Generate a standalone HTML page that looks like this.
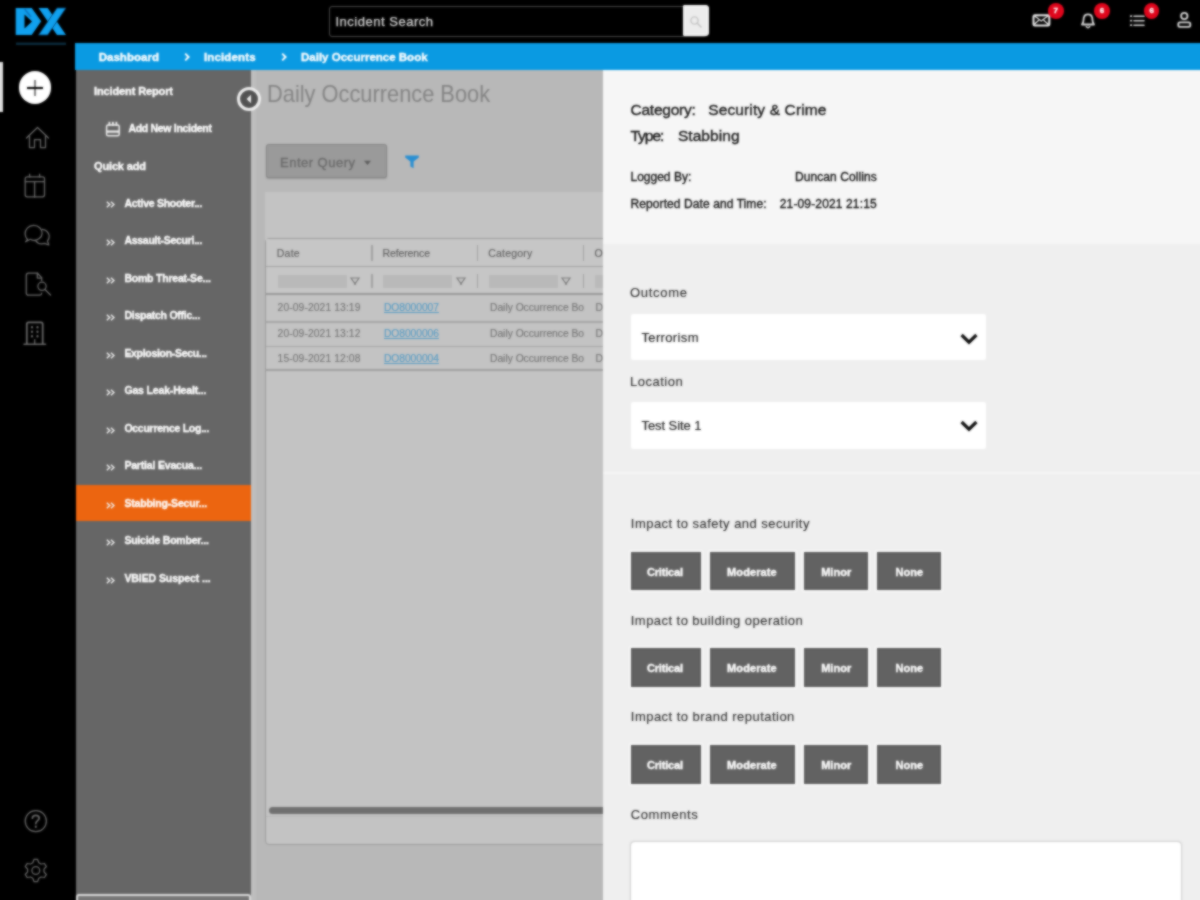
<!DOCTYPE html>
<html>
<head>
<meta charset="utf-8">
<title>Daily Occurrence Book</title>
<style>
*{box-sizing:border-box;margin:0;padding:0}
html,body{width:1200px;height:900px;overflow:hidden;background:#000;font-family:"Liberation Sans",sans-serif;}
#clip{position:absolute;left:0;top:0;width:1200px;height:900px;overflow:hidden}
#root{position:absolute;left:-12px;top:-12px;width:1224px;height:924px;overflow:hidden;filter:url(#bl)}
#in{position:absolute;left:12px;top:12px;width:1200px;height:900px}
.a{position:absolute}
.t{position:absolute;white-space:pre;line-height:1;-webkit-text-stroke:0.35px}
svg{position:absolute;overflow:visible}
</style>
</head>
<body>
<svg width="0" height="0" style="position:absolute"><defs><filter id="bl" x="0" y="0" width="100%" height="100%" color-interpolation-filters="sRGB"><feGaussianBlur stdDeviation="0.9" result="b"/><feComposite in="SourceGraphic" in2="b" operator="arithmetic" k1="0" k2="0.2" k3="0.8" k4="0"/></filter></defs></svg>
<div id="clip"><div id="root"><div id="in">

<div class="a" style="left:-12px;top:-12px;width:1224px;height:924px;background:#000"></div>
<div class="a" style="left:75px;top:43px;width:1140px;height:27px;background:#0a9ae2"></div>
<div class="a" style="left:76px;top:70px;width:175px;height:845px;background:#666"></div>
<div class="a" style="left:251px;top:70px;width:352px;height:845px;background:#b8b8b8"></div>
<div class="a" style="left:251px;top:70px;width:5px;height:845px;background:#bebebe"></div>
<div class="a" style="left:603px;top:70px;width:612px;height:174px;background:#f6f6f6"></div>
<div class="a" style="left:603px;top:244px;width:612px;height:671px;background:#efefef"></div>
<div class="a" style="left:603px;top:472px;width:612px;height:2px;background:#f5f5f5"></div>
<svg style="left:0;top:0" width="80" height="50" viewBox="0 0 80 50">
<g fill="#10a0ee">
<path d="M15.7 8 L31.7 8 L41.2 21.3 L31.7 35 L15.7 35 Z M24.5 14.6 L24.5 28.6 L32 21.5 Z" fill-rule="evenodd"/>
<path d="M38.5 8 L47.7 8 L66 35 L57 35 Z"/>
<path d="M57 8 L66 8 L47.7 35 L38.5 35 Z" stroke="#063a63" stroke-width="0.8"/>
</g>
<path d="M24.6 9 L31 17" fill="none" stroke="#0a4f98" stroke-width="1.6" opacity=".55"/>
<rect x="16" y="42.6" width="50" height="2.4" fill="#0b2c3d"/>
</svg>
<div class="a" style="left:329px;top:5.8px;width:378px;height:31.2px;border:1.5px solid #4a4a4a;border-radius:3px;background:#000"></div>
<div class="a" style="left:682.5px;top:5.3px;width:26px;height:30.6px;background:#ececec;border:1.5px solid #fff;border-radius:1px 3px 3px 1px"></div>
<svg style="left:687.6px;top:14.4px" width="16" height="16" viewBox="0 0 16 16"><circle cx="6.5" cy="6.5" r="3.6" fill="none" stroke="#c4c4c4" stroke-width="1.4"/><path d="M9.3 9.3 L13 13" stroke="#c4c4c4" stroke-width="1.6" stroke-linecap="round"/></svg>
<span class="t" style="left:335.5px;top:14.7px;font-size:13px;color:#dadada;font-weight:400;letter-spacing:0.51px;-webkit-text-stroke:0.25px;">Incident Search</span>
<svg style="left:1025px;top:0" width="175" height="43" viewBox="1025 0 175 43" fill="none" stroke="#dcdcdc" stroke-width="1.8" stroke-linejoin="round" stroke-linecap="round">
<rect x="1033.5" y="15.2" width="15.8" height="10.4"  rx="1.5" stroke="#f2f2f2" stroke-width="2"/>
<path d="M1034 15.5 L1041.2 21 L1048.5 15.5 M1034 24.5 L1038.5 20.5 M1048.5 24.5 L1044 20.5" stroke-width="1.5"/>
<path d="M1082 24.5 C1084 22.5 1083.3 19 1084 17 C1085 13.5 1091 13.5 1092 17 C1092.7 19 1092 22.5 1094 24.5 Z"/>
<path d="M1086.3 26.8 Q1088 28.6 1089.7 26.8" stroke-width="1.6"/>
<path d="M1134 16.2 H1144 M1134 20.7 H1144 M1134 25.2 H1144" stroke-width="1.6"/>
<path d="M1130.8 16.2 h.6 M1130.8 20.7 h.6 M1130.8 25.2 h.6" stroke-width="1.8"/>
<circle cx="1184.3" cy="16" r="3.2"/>
<rect x="1178.3" y="22.3" width="12" height="4.6" rx="1.6"/>
</svg>
<div class="a" style="left:1048.0px;top:3.2px;width:15.6px;height:15.6px;border-radius:50%;background:#e0061c"></div>
<span class="t" style="left:1053.5px;top:7.0px;font-size:8px;color:#fff;font-weight:700;">7</span>
<div class="a" style="left:1094.2px;top:3.2px;width:15.6px;height:15.6px;border-radius:50%;background:#e0061c"></div>
<span class="t" style="left:1099.7px;top:7.0px;font-size:8px;color:#fff;font-weight:700;">6</span>
<div class="a" style="left:1143.9px;top:3.2px;width:15.6px;height:15.6px;border-radius:50%;background:#e0061c"></div>
<span class="t" style="left:1149.4px;top:7.0px;font-size:8px;color:#fff;font-weight:700;">6</span>
<span class="t" style="left:98.7px;top:51.5px;font-size:11.5px;color:#fff;font-weight:700;letter-spacing:0.03px;">Dashboard</span>
<span class="t" style="left:204.0px;top:51.5px;font-size:11.5px;color:#fff;font-weight:700;letter-spacing:0.13px;">Incidents</span>
<span class="t" style="left:301.0px;top:51.5px;font-size:11.5px;color:#fff;font-weight:700;">Daily Occurrence Book</span>
<svg style="left:182.5px;top:51.4px" width="8" height="12" viewBox="0 0 8 12"><path d="M2.2 2.6 L5.6 6 L2.2 9.4" fill="none" stroke="#fff" stroke-width="1.9"/></svg>
<svg style="left:279.5px;top:51.4px" width="8" height="12" viewBox="0 0 8 12"><path d="M2.2 2.6 L5.6 6 L2.2 9.4" fill="none" stroke="#fff" stroke-width="1.9"/></svg>
<div class="a" style="left:-12px;top:62px;width:15px;height:50px;background:#dcdcdc"></div>
<div class="a" style="left:19px;top:71.2px;width:32.4px;height:32.4px;border-radius:50%;background:#fff"></div>
<div class="a" style="left:34.1px;top:79.6px;width:2.4px;height:16px;background:#808080"></div>
<div class="a" style="left:27.3px;top:86.5px;width:16px;height:2.6px;background:#000"></div>
<svg style="left:0;top:110px" width="76" height="260" viewBox="0 110 76 260" fill="none" stroke="#6a6a6a" stroke-width="1.25" stroke-linejoin="round" stroke-linecap="round">
<path d="M26.5 138 L37.5 127.5 L48.5 138"/>
<path d="M29.5 136 V147.5 H34.5 V139.5 H40.5 V147.5 H45.5 V136"/>
<rect x="25.2" y="176.8" width="19.3" height="20" rx="2"/>
<path d="M25.2 181.5 H44.5 M34.6 181.5 V197 M29.6 174.2 V177 M39.6 174.2 V177"/>
<path d="M27.5 239.5 C24.5 236.5 24.3 231.5 27.3 228.2 C30.5 224.7 36.5 224.5 39.8 227.8 C43 231 42.8 236 39.3 238.6 C36.5 240.7 32.8 240.8 30.3 239.3 L25.6 241.8 Z"/>
<path d="M42 229.3 C45.5 229.5 48.8 232 49.2 235.8 C49.4 238 48.6 239.8 47.5 241 L48.8 245 L44.5 243.4 C41 244.3 37.5 243.2 35.8 240.8"/>
<path d="M37.5 273.2 H28.5 Q26.3 273.2 26.3 275.4 V293 Q26.3 295.2 28.5 295.2 H39.5 Q41.5 295.2 41.7 293.2"/>
<path d="M37.5 273.2 L41.7 277.6 V280.5 M37.3 273.4 V278 H41.5"/>
<circle cx="42" cy="286.3" r="4.1"/>
<path d="M45 289.5 L50.5 295"/>
<path d="M26.8 344 V324 Q26.8 322.3 28.5 322.3 H41 Q42.7 322.3 42.7 324 V344" stroke-width="1.7"/>
<path d="M24 344.2 H45.5" stroke-width="1.6"/>
<path d="M32 327 v.4 M37.5 327 v.4 M32 331.5 v.4 M37.5 331.5 v.4 M32 336 v.4 M37.5 336 v.4" stroke-width="2.2"/>
<path d="M34.7 344 V339.5"/>
</svg>
<svg style="left:0;top:800px" width="76" height="100" viewBox="0 800 76 100" fill="none" stroke="#6a6a6a" stroke-width="1.25" stroke-linejoin="round" stroke-linecap="round">
<circle cx="35.8" cy="821.1" r="10.6"/>
<path d="M32.4 818.2 C32.4 814.3 39.2 814.3 39.2 818.2 C39.2 820.6 35.8 820.8 35.8 823.6" stroke-width="1.7"/>
<path d="M35.8 826.6 v.5" stroke-width="2"/>
<circle cx="35.8" cy="870.5" r="3.9"/>
<path d="M38.8 862.8 L37.6 859.4 L34.0 859.4 L32.8 862.8 L30.6 864.0 L27.1 863.5 L25.3 866.5 L27.6 869.2 L27.6 871.8 L25.3 874.5 L27.1 877.5 L30.6 877.0 L32.8 878.2 L34.0 881.6 L37.6 881.6 L38.8 878.2 L41.0 877.0 L44.5 877.5 L46.3 874.5 L44.0 871.8 L44.0 869.2 L46.3 866.5 L44.5 863.5 L41.0 864.0 Z"/>
</svg>
<div class="a" style="left:76px;top:485px;width:175.3px;height:36px;background:#ec6510"></div>
<span class="t" style="left:94.0px;top:86.0px;font-size:11px;color:#fff;font-weight:700;letter-spacing:-0.12px;">Incident Report</span>
<span class="t" style="left:128.4px;top:123.0px;font-size:10.5px;color:#fff;font-weight:700;letter-spacing:-0.30px;">Add New Incident</span>
<span class="t" style="left:94.0px;top:161.0px;font-size:11px;color:#fff;font-weight:700;letter-spacing:-0.15px;">Quick add</span>
<svg style="left:104px;top:120px" width="18" height="18" viewBox="104 120 18 18" fill="none" stroke="#efefef" stroke-width="1.5" stroke-linejoin="round">
<rect x="106.6" y="125" width="12.6" height="10.8" rx="1.6"/>
<path d="M106.6 131.6 H119.2" stroke-width="2.2"/>
<path d="M109.4 121.8 V126 M112.9 121.8 V126 M116.4 121.8 V126" stroke-width="1.8"/>
</svg>
<span class="t" style="left:124.4px;top:197.6px;font-size:10.5px;color:#fff;font-weight:700;letter-spacing:-0.27px;">Active Shooter...</span>
<svg style="left:105px;top:200.3px" width="12" height="9" viewBox="0 0 12 9"><path d="M1.8 1.8 L4.7 4.5 L1.8 7.2 M6 1.8 L8.9 4.5 L6 7.2" fill="none" stroke="#f0f0f0" stroke-width="1.4"/></svg>
<span class="t" style="left:124.4px;top:235.3px;font-size:10.5px;color:#fff;font-weight:700;letter-spacing:-0.27px;">Assault-Securi...</span>
<svg style="left:105px;top:238.0px" width="12" height="9" viewBox="0 0 12 9"><path d="M1.8 1.8 L4.7 4.5 L1.8 7.2 M6 1.8 L8.9 4.5 L6 7.2" fill="none" stroke="#f0f0f0" stroke-width="1.4"/></svg>
<span class="t" style="left:124.4px;top:272.8px;font-size:10.5px;color:#fff;font-weight:700;letter-spacing:-0.21px;">Bomb Threat-Se...</span>
<svg style="left:105px;top:275.5px" width="12" height="9" viewBox="0 0 12 9"><path d="M1.8 1.8 L4.7 4.5 L1.8 7.2 M6 1.8 L8.9 4.5 L6 7.2" fill="none" stroke="#f0f0f0" stroke-width="1.4"/></svg>
<span class="t" style="left:124.4px;top:310.3px;font-size:10.5px;color:#fff;font-weight:700;letter-spacing:-0.25px;">Dispatch Offic...</span>
<svg style="left:105px;top:313.0px" width="12" height="9" viewBox="0 0 12 9"><path d="M1.8 1.8 L4.7 4.5 L1.8 7.2 M6 1.8 L8.9 4.5 L6 7.2" fill="none" stroke="#f0f0f0" stroke-width="1.4"/></svg>
<span class="t" style="left:124.4px;top:347.8px;font-size:10.5px;color:#fff;font-weight:700;letter-spacing:-0.31px;">Explosion-Secu...</span>
<svg style="left:105px;top:350.5px" width="12" height="9" viewBox="0 0 12 9"><path d="M1.8 1.8 L4.7 4.5 L1.8 7.2 M6 1.8 L8.9 4.5 L6 7.2" fill="none" stroke="#f0f0f0" stroke-width="1.4"/></svg>
<span class="t" style="left:124.4px;top:385.3px;font-size:10.5px;color:#fff;font-weight:700;letter-spacing:-0.16px;">Gas Leak-Healt...</span>
<svg style="left:105px;top:388.0px" width="12" height="9" viewBox="0 0 12 9"><path d="M1.8 1.8 L4.7 4.5 L1.8 7.2 M6 1.8 L8.9 4.5 L6 7.2" fill="none" stroke="#f0f0f0" stroke-width="1.4"/></svg>
<span class="t" style="left:124.4px;top:422.8px;font-size:10.5px;color:#fff;font-weight:700;letter-spacing:-0.27px;">Occurrence Log...</span>
<svg style="left:105px;top:425.5px" width="12" height="9" viewBox="0 0 12 9"><path d="M1.8 1.8 L4.7 4.5 L1.8 7.2 M6 1.8 L8.9 4.5 L6 7.2" fill="none" stroke="#f0f0f0" stroke-width="1.4"/></svg>
<span class="t" style="left:124.4px;top:460.3px;font-size:10.5px;color:#fff;font-weight:700;letter-spacing:-0.18px;">Partial Evacua...</span>
<svg style="left:105px;top:463.0px" width="12" height="9" viewBox="0 0 12 9"><path d="M1.8 1.8 L4.7 4.5 L1.8 7.2 M6 1.8 L8.9 4.5 L6 7.2" fill="none" stroke="#f0f0f0" stroke-width="1.4"/></svg>
<span class="t" style="left:124.4px;top:497.8px;font-size:10.5px;color:#fff;font-weight:700;letter-spacing:-0.19px;">Stabbing-Secur...</span>
<svg style="left:105px;top:500.5px" width="12" height="9" viewBox="0 0 12 9"><path d="M1.8 1.8 L4.7 4.5 L1.8 7.2 M6 1.8 L8.9 4.5 L6 7.2" fill="none" stroke="#f0f0f0" stroke-width="1.4"/></svg>
<span class="t" style="left:124.4px;top:535.3px;font-size:10.5px;color:#fff;font-weight:700;letter-spacing:-0.23px;">Suicide Bomber...</span>
<svg style="left:105px;top:538.0px" width="12" height="9" viewBox="0 0 12 9"><path d="M1.8 1.8 L4.7 4.5 L1.8 7.2 M6 1.8 L8.9 4.5 L6 7.2" fill="none" stroke="#f0f0f0" stroke-width="1.4"/></svg>
<span class="t" style="left:124.4px;top:572.8px;font-size:10.5px;color:#fff;font-weight:700;letter-spacing:-0.08px;">VBIED Suspect ...</span>
<svg style="left:105px;top:575.5px" width="12" height="9" viewBox="0 0 12 9"><path d="M1.8 1.8 L4.7 4.5 L1.8 7.2 M6 1.8 L8.9 4.5 L6 7.2" fill="none" stroke="#f0f0f0" stroke-width="1.4"/></svg>
<div class="a" style="left:76px;top:894px;width:175px;height:22px;background:#787878;border:2px solid #dadada;border-radius:3px"></div>
<div class="a" style="left:237px;top:87.2px;width:24px;height:24px;border-radius:50%;background:#525252;border:3px solid #ececec"></div>
<svg style="left:243.6px;top:93.2px" width="10" height="12" viewBox="0 0 10 12"><path d="M7 1.8 L2.6 6 L7 10.2 Z" fill="#f0f0f0"/></svg>
<span class="t" style="left:267.4px;top:82.1px;font-size:24px;color:#848484;font-weight:400;-webkit-text-stroke:0;transform:scaleX(0.909);transform-origin:0 0;">Daily Occurrence Book</span>
<div class="a" style="left:265.5px;top:143.8px;width:121.5px;height:34px;background:#9a9a9a;border:1.5px solid #858585;border-radius:2.5px;box-shadow:0 1px 1.5px rgba(90,90,90,.35)"></div>
<span class="t" style="left:280.0px;top:155.7px;font-size:13px;color:#6a6a6a;font-weight:400;letter-spacing:0.49px;">Enter Query</span>
<svg style="left:363px;top:159.5px" width="9" height="6" viewBox="0 0 9 6"><path d="M1 .8 H8 L4.5 5 Z" fill="#5e5e5e"/></svg>
<svg style="left:404px;top:154px" width="16" height="16" viewBox="0 0 16 16"><path d="M1.2 1.6 H14.8 V3.4 L9.6 7.6 V14.2 L6.4 12.4 V7.6 L1.2 3.4 Z" fill="#2a8fd2"/></svg>
<div class="a" style="left:265px;top:191.5px;width:338px;height:48px;background:#c3c3c3"></div>
<div class="a" style="left:265px;top:238px;width:345px;height:607px;background:#c3c3c3;border:1.5px solid #9c9c9c;border-radius:4px"></div>
<div class="a" style="left:266px;top:239px;width:337px;height:56px;background:#c6c6c6"></div>
<div class="a" style="left:266px;top:265.6px;width:337px;height:1.4px;background:#a3a3a3"></div>
<div class="a" style="left:266px;top:293.4px;width:337px;height:2px;background:#9a9a9a"></div>
<div class="a" style="left:266px;top:321px;width:337px;height:1.5px;background:#a6a6a6"></div>
<div class="a" style="left:266px;top:345.5px;width:337px;height:1.5px;background:#a6a6a6"></div>
<div class="a" style="left:266px;top:369px;width:337px;height:1.7px;background:#a0a0a0"></div>
<div class="a" style="left:371.2px;top:244.5px;width:1.4px;height:16px;background:#a2a2a2"></div>
<div class="a" style="left:371.2px;top:274px;width:1.4px;height:14px;background:#a2a2a2"></div>
<div class="a" style="left:477px;top:244.5px;width:1.4px;height:16px;background:#a2a2a2"></div>
<div class="a" style="left:477px;top:274px;width:1.4px;height:14px;background:#a2a2a2"></div>
<div class="a" style="left:582.7px;top:244.5px;width:1.4px;height:16px;background:#a2a2a2"></div>
<div class="a" style="left:582.7px;top:274px;width:1.4px;height:14px;background:#a2a2a2"></div>
<span class="t" style="left:276.7px;top:248.2px;font-size:10.5px;color:#5e5e5e;font-weight:400;letter-spacing:0.27px;-webkit-text-stroke:0.12px;">Date</span>
<span class="t" style="left:382.5px;top:248.2px;font-size:10.5px;color:#5e5e5e;font-weight:400;letter-spacing:-0.12px;-webkit-text-stroke:0.12px;">Reference</span>
<span class="t" style="left:488.3px;top:248.2px;font-size:10.5px;color:#5e5e5e;font-weight:400;letter-spacing:0.20px;-webkit-text-stroke:0.12px;">Category</span>
<span class="t" style="left:594.5px;top:248.2px;font-size:10.5px;color:#5e5e5e;font-weight:400;-webkit-text-stroke:0.12px;">O</span>
<div class="a" style="left:277.5px;top:274.5px;width:69px;height:13.5px;background:#b9b9b9"></div>
<svg style="left:349.6px;top:276.5px" width="10" height="9" viewBox="0 0 10 9"><path d="M1 1 H9 L5 6.8 Z" fill="none" stroke="#7c7c7c" stroke-width="1.2"/><path d="M5 5 V8" stroke="#7c7c7c" stroke-width="1.4"/></svg>
<div class="a" style="left:383.4px;top:274.5px;width:69px;height:13.5px;background:#b9b9b9"></div>
<svg style="left:455.5px;top:276.5px" width="10" height="9" viewBox="0 0 10 9"><path d="M1 1 H9 L5 6.8 Z" fill="none" stroke="#7c7c7c" stroke-width="1.2"/><path d="M5 5 V8" stroke="#7c7c7c" stroke-width="1.4"/></svg>
<div class="a" style="left:489.2px;top:274.5px;width:69px;height:13.5px;background:#b9b9b9"></div>
<svg style="left:561.3px;top:276.5px" width="10" height="9" viewBox="0 0 10 9"><path d="M1 1 H9 L5 6.8 Z" fill="none" stroke="#7c7c7c" stroke-width="1.2"/><path d="M5 5 V8" stroke="#7c7c7c" stroke-width="1.4"/></svg>
<div class="a" style="left:594.5px;top:274.5px;width:9px;height:13.5px;background:#bababa"></div>
<span class="t" style="left:277.6px;top:303.0px;font-size:10.3px;color:#747474;font-weight:400;letter-spacing:0.10px;-webkit-text-stroke:0.12px;">20-09-2021 13:19</span>
<span class="t" style="left:384.0px;top:303.0px;font-size:10.3px;color:#559bc4;font-weight:400;letter-spacing:-0.07px;text-decoration:underline;-webkit-text-stroke:0.12px;">DO8000007</span>
<span class="t" style="left:490.0px;top:303.0px;font-size:10.3px;color:#747474;font-weight:400;letter-spacing:-0.02px;-webkit-text-stroke:0.12px;">Daily Occurrence Bo</span>
<span class="t" style="left:595.5px;top:303.0px;font-size:10.3px;color:#747474;font-weight:400;-webkit-text-stroke:0.12px;">D</span>
<span class="t" style="left:277.6px;top:328.9px;font-size:10.3px;color:#747474;font-weight:400;letter-spacing:0.10px;-webkit-text-stroke:0.12px;">20-09-2021 13:12</span>
<span class="t" style="left:384.0px;top:328.9px;font-size:10.3px;color:#559bc4;font-weight:400;letter-spacing:-0.07px;text-decoration:underline;-webkit-text-stroke:0.12px;">DO8000006</span>
<span class="t" style="left:490.0px;top:328.9px;font-size:10.3px;color:#747474;font-weight:400;letter-spacing:-0.02px;-webkit-text-stroke:0.12px;">Daily Occurrence Bo</span>
<span class="t" style="left:595.5px;top:328.9px;font-size:10.3px;color:#747474;font-weight:400;-webkit-text-stroke:0.12px;">D</span>
<span class="t" style="left:277.6px;top:354.4px;font-size:10.3px;color:#747474;font-weight:400;letter-spacing:0.10px;-webkit-text-stroke:0.12px;">15-09-2021 12:08</span>
<span class="t" style="left:384.0px;top:354.4px;font-size:10.3px;color:#559bc4;font-weight:400;letter-spacing:-0.07px;text-decoration:underline;-webkit-text-stroke:0.12px;">DO8000004</span>
<span class="t" style="left:490.0px;top:354.4px;font-size:10.3px;color:#747474;font-weight:400;letter-spacing:-0.02px;-webkit-text-stroke:0.12px;">Daily Occurrence Bo</span>
<span class="t" style="left:595.5px;top:354.4px;font-size:10.3px;color:#747474;font-weight:400;-webkit-text-stroke:0.12px;">D</span>
<div class="a" style="left:268.5px;top:806.5px;width:340px;height:7px;background:#707070;border-radius:3.5px"></div>
<div class="a" style="left:266px;top:815.8px;width:337px;height:1px;background:#b6b6b6"></div>
<div class="a" style="left:603px;top:70px;width:612px;height:174px;background:#f6f6f6"></div>
<div class="a" style="left:603px;top:244px;width:612px;height:671px;background:#efefef"></div>
<div class="a" style="left:603px;top:472px;width:612px;height:2px;background:#f5f5f5"></div>
<span class="t" style="left:630.5px;top:102.1px;font-size:15.5px;color:#141414;font-weight:400;letter-spacing:-0.24px;">Category:</span>
<span class="t" style="left:708.2px;top:102.1px;font-size:15.5px;color:#141414;font-weight:400;letter-spacing:0.13px;">Security &amp; Crime</span>
<span class="t" style="left:630.5px;top:128.1px;font-size:15.5px;color:#141414;font-weight:400;letter-spacing:-1.03px;">Type:</span>
<span class="t" style="left:677.9px;top:128.1px;font-size:15.5px;color:#141414;font-weight:400;letter-spacing:0.06px;">Stabbing</span>
<span class="t" style="left:630.5px;top:170.9px;font-size:12px;color:#141414;font-weight:400;">Logged By:</span>
<span class="t" style="left:795.0px;top:170.9px;font-size:12px;color:#141414;font-weight:400;letter-spacing:0.08px;">Duncan Collins</span>
<span class="t" style="left:630.5px;top:197.7px;font-size:12px;color:#141414;font-weight:400;letter-spacing:0.09px;">Reported Date and Time:</span>
<span class="t" style="left:779.8px;top:197.7px;font-size:12px;color:#141414;font-weight:400;letter-spacing:0.14px;">21-09-2021 21:15</span>
<span class="t" style="left:630.0px;top:286.1px;font-size:13px;color:#2c2c2c;font-weight:400;letter-spacing:0.71px;-webkit-text-stroke:0.1px;">Outcome</span>
<div class="a" style="left:631px;top:314.3px;width:354.7px;height:46px;background:#fff;border-radius:2px"></div>
<span class="t" style="left:641.5px;top:331.4px;font-size:13px;color:#1c1c1c;font-weight:400;letter-spacing:0.35px;-webkit-text-stroke:0.15px;">Terrorism</span>
<span class="t" style="left:630.0px;top:374.8px;font-size:13px;color:#2c2c2c;font-weight:400;letter-spacing:0.51px;-webkit-text-stroke:0.1px;">Location</span>
<div class="a" style="left:631px;top:402.4px;width:354.7px;height:46.6px;background:#fff;border-radius:2px"></div>
<span class="t" style="left:641.5px;top:418.5px;font-size:13px;color:#1c1c1c;font-weight:400;letter-spacing:-0.07px;-webkit-text-stroke:0.15px;">Test Site 1</span>
<svg style="left:958px;top:330.6px" width="22" height="16" viewBox="0 0 22 16"><path d="M3.6 4 L11 11.2 L18.4 4" fill="none" stroke="#111" stroke-width="3.2"/></svg>
<svg style="left:958px;top:417.7px" width="22" height="16" viewBox="0 0 22 16"><path d="M3.6 4 L11 11.2 L18.4 4" fill="none" stroke="#111" stroke-width="3.2"/></svg>
<span class="t" style="left:630.8px;top:517.1px;font-size:13px;color:#2c2c2c;font-weight:400;letter-spacing:0.47px;-webkit-text-stroke:0.1px;">Impact to safety and security</span>
<div class="a" style="left:630.8px;top:551.6px;width:70px;height:38.6px;background:#626262;box-shadow:0 0 0 1.6px rgba(252,252,252,.85), inset 0 0 0 1px #595959"></div>
<span class="t" style="left:647.0px;top:566.5px;font-size:11px;color:#fff;font-weight:700;letter-spacing:-0.19px;">Critical</span>
<div class="a" style="left:710.1px;top:551.6px;width:84.7px;height:38.6px;background:#626262;box-shadow:0 0 0 1.6px rgba(252,252,252,.85), inset 0 0 0 1px #595959"></div>
<span class="t" style="left:727.1px;top:566.5px;font-size:11px;color:#fff;font-weight:700;letter-spacing:0.10px;">Moderate</span>
<div class="a" style="left:804.2px;top:551.6px;width:63.8px;height:38.6px;background:#626262;box-shadow:0 0 0 1.6px rgba(252,252,252,.85), inset 0 0 0 1px #595959"></div>
<span class="t" style="left:821.2px;top:566.5px;font-size:11px;color:#fff;font-weight:700;letter-spacing:0.01px;">Minor</span>
<div class="a" style="left:877px;top:551.6px;width:63.8px;height:38.6px;background:#626262;box-shadow:0 0 0 1.6px rgba(252,252,252,.85), inset 0 0 0 1px #595959"></div>
<span class="t" style="left:895.4px;top:566.5px;font-size:11px;color:#fff;font-weight:700;letter-spacing:0.10px;">None</span>
<span class="t" style="left:630.8px;top:613.6px;font-size:13px;color:#2c2c2c;font-weight:400;letter-spacing:0.45px;-webkit-text-stroke:0.1px;">Impact to building operation</span>
<div class="a" style="left:630.8px;top:648.2px;width:70px;height:38.6px;background:#626262;box-shadow:0 0 0 1.6px rgba(252,252,252,.85), inset 0 0 0 1px #595959"></div>
<span class="t" style="left:647.0px;top:663.1px;font-size:11px;color:#fff;font-weight:700;letter-spacing:-0.19px;">Critical</span>
<div class="a" style="left:710.1px;top:648.2px;width:84.7px;height:38.6px;background:#626262;box-shadow:0 0 0 1.6px rgba(252,252,252,.85), inset 0 0 0 1px #595959"></div>
<span class="t" style="left:727.1px;top:663.1px;font-size:11px;color:#fff;font-weight:700;letter-spacing:0.10px;">Moderate</span>
<div class="a" style="left:804.2px;top:648.2px;width:63.8px;height:38.6px;background:#626262;box-shadow:0 0 0 1.6px rgba(252,252,252,.85), inset 0 0 0 1px #595959"></div>
<span class="t" style="left:821.2px;top:663.1px;font-size:11px;color:#fff;font-weight:700;letter-spacing:0.01px;">Minor</span>
<div class="a" style="left:877px;top:648.2px;width:63.8px;height:38.6px;background:#626262;box-shadow:0 0 0 1.6px rgba(252,252,252,.85), inset 0 0 0 1px #595959"></div>
<span class="t" style="left:895.4px;top:663.1px;font-size:11px;color:#fff;font-weight:700;letter-spacing:0.10px;">None</span>
<span class="t" style="left:630.8px;top:709.7px;font-size:13px;color:#2c2c2c;font-weight:400;letter-spacing:0.47px;-webkit-text-stroke:0.1px;">Impact to brand reputation</span>
<div class="a" style="left:630.8px;top:745px;width:70px;height:38.6px;background:#626262;box-shadow:0 0 0 1.6px rgba(252,252,252,.85), inset 0 0 0 1px #595959"></div>
<span class="t" style="left:647.0px;top:759.9px;font-size:11px;color:#fff;font-weight:700;letter-spacing:-0.19px;">Critical</span>
<div class="a" style="left:710.1px;top:745px;width:84.7px;height:38.6px;background:#626262;box-shadow:0 0 0 1.6px rgba(252,252,252,.85), inset 0 0 0 1px #595959"></div>
<span class="t" style="left:727.1px;top:759.9px;font-size:11px;color:#fff;font-weight:700;letter-spacing:0.10px;">Moderate</span>
<div class="a" style="left:804.2px;top:745px;width:63.8px;height:38.6px;background:#626262;box-shadow:0 0 0 1.6px rgba(252,252,252,.85), inset 0 0 0 1px #595959"></div>
<span class="t" style="left:821.2px;top:759.9px;font-size:11px;color:#fff;font-weight:700;letter-spacing:0.01px;">Minor</span>
<div class="a" style="left:877px;top:745px;width:63.8px;height:38.6px;background:#626262;box-shadow:0 0 0 1.6px rgba(252,252,252,.85), inset 0 0 0 1px #595959"></div>
<span class="t" style="left:895.4px;top:759.9px;font-size:11px;color:#fff;font-weight:700;letter-spacing:0.10px;">None</span>
<span class="t" style="left:630.8px;top:807.5px;font-size:13px;color:#2c2c2c;font-weight:400;letter-spacing:0.59px;-webkit-text-stroke:0.1px;">Comments</span>
<div class="a" style="left:631px;top:842px;width:549.5px;height:80px;background:#fff;border-radius:4px;box-shadow:0 0 1.5px .5px rgba(190,190,190,.7)"></div>
</div></div></div>
</body>
</html>
